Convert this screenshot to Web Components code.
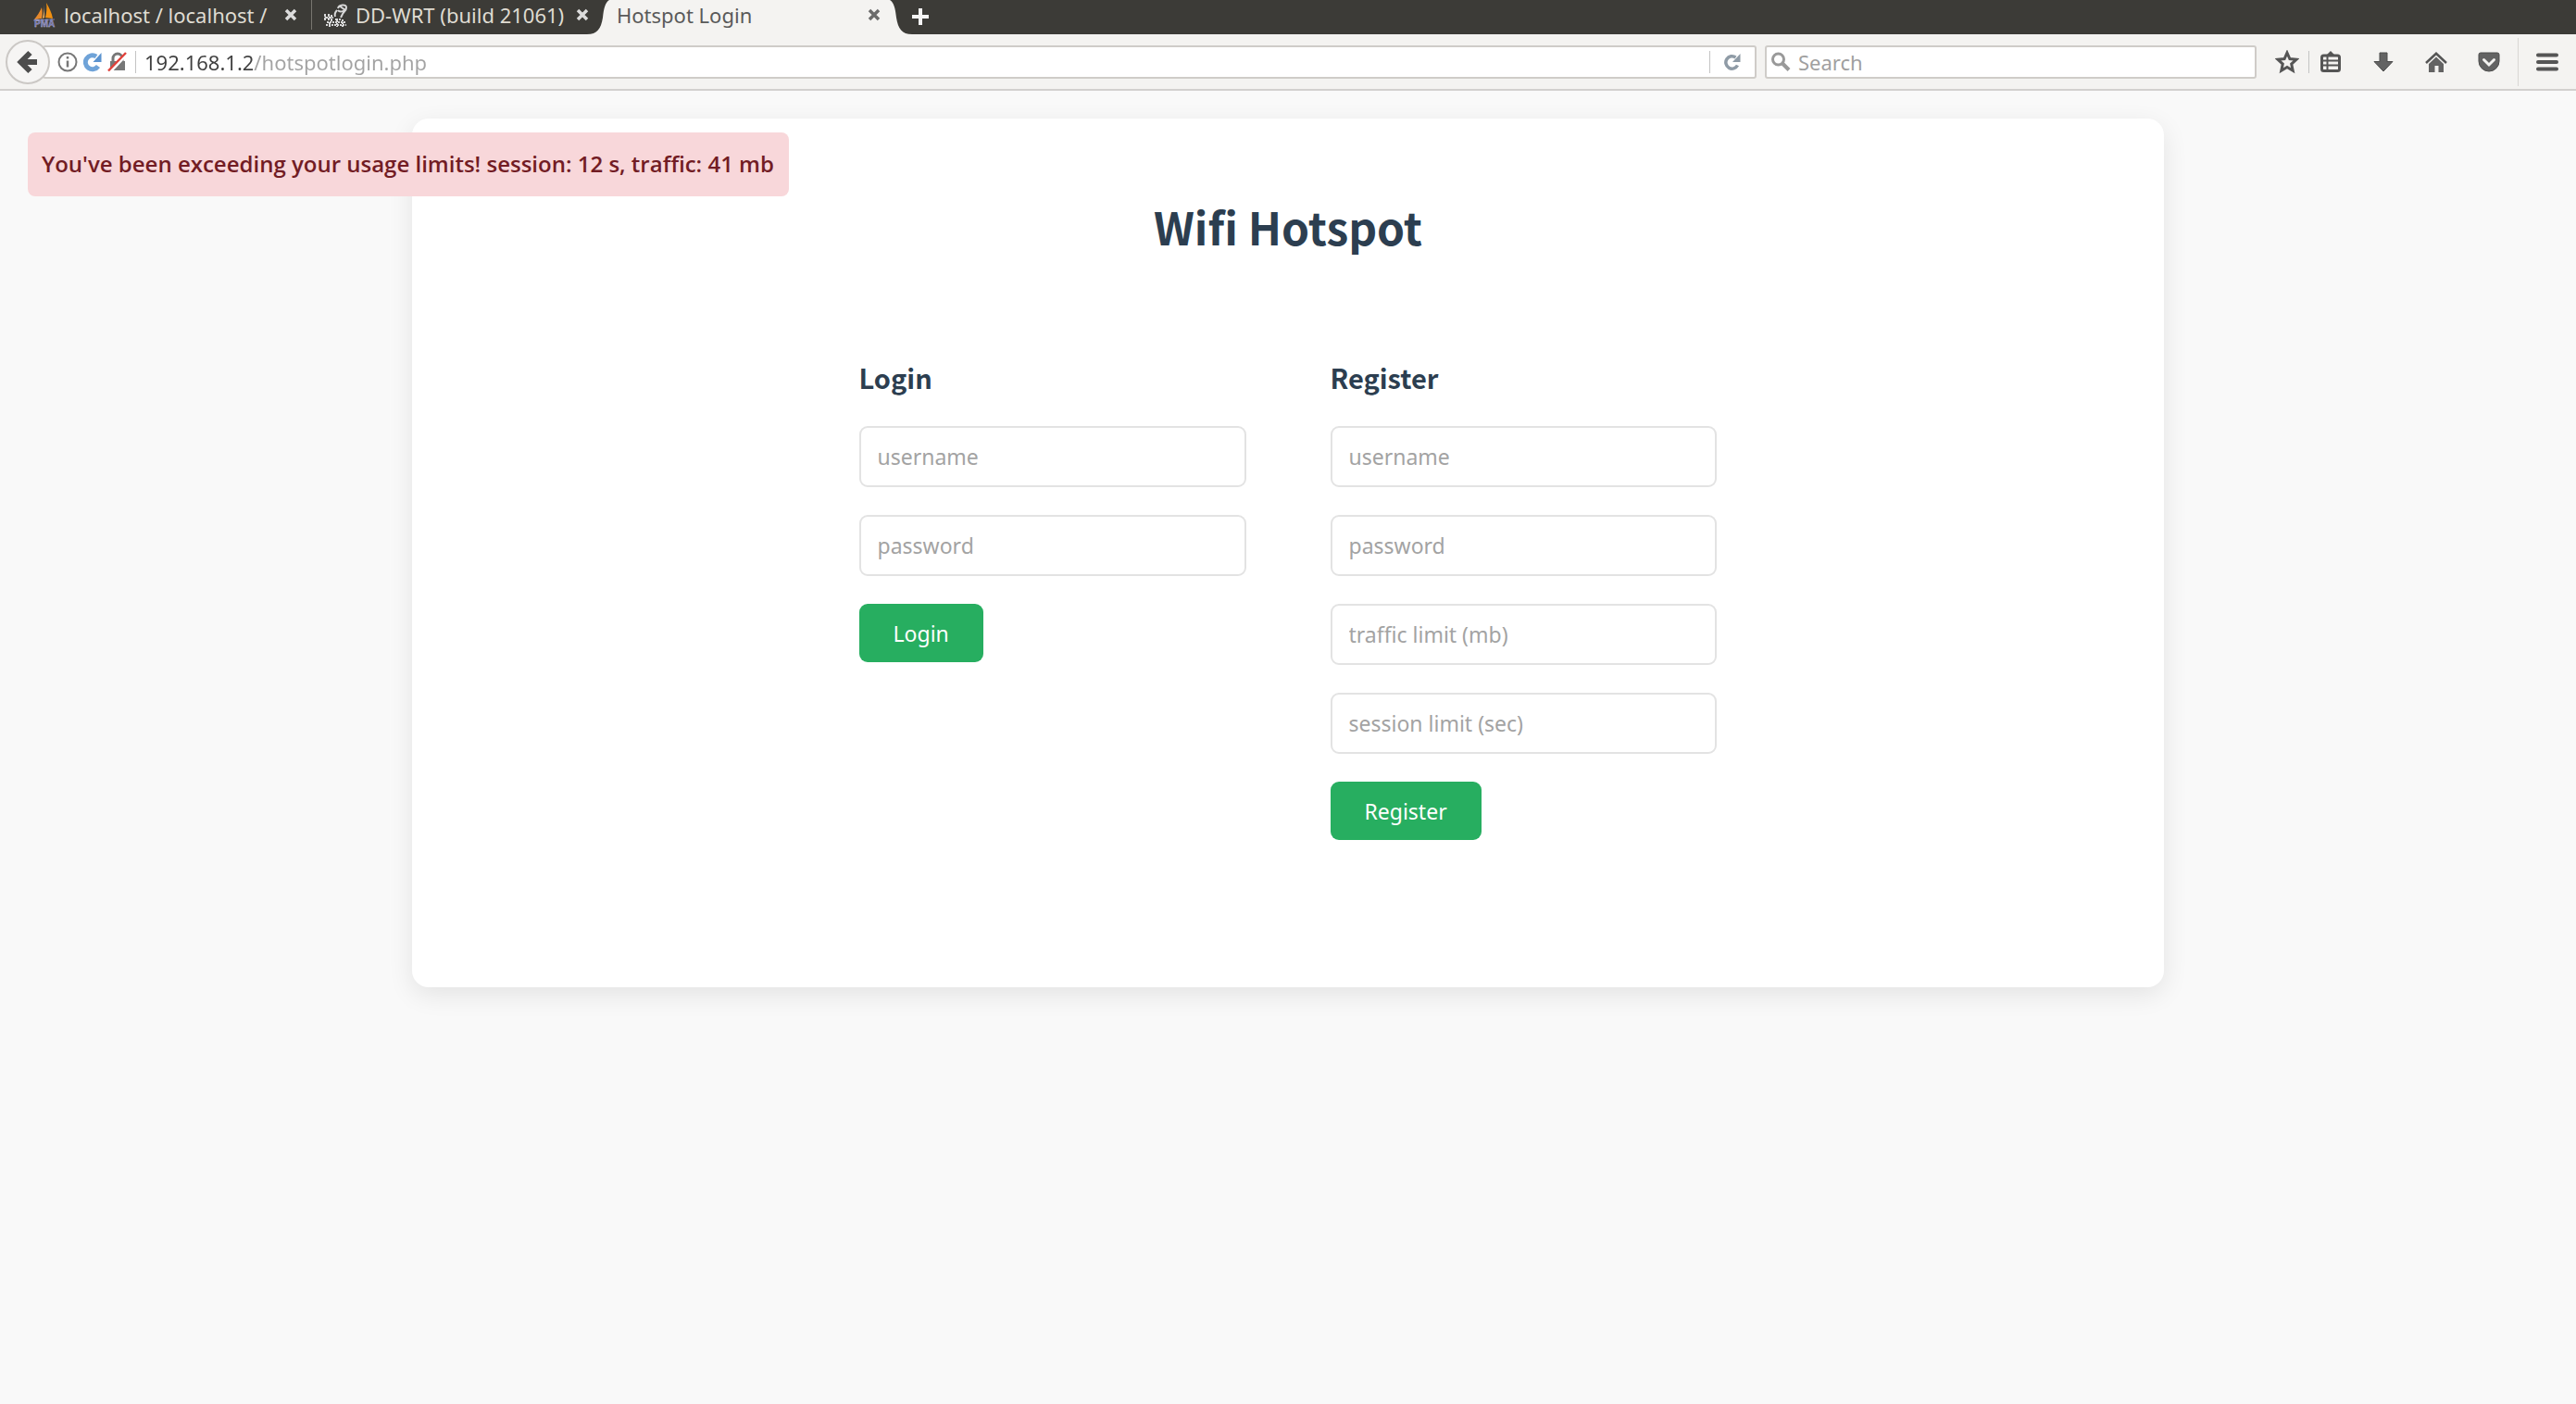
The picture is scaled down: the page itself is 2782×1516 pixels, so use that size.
<!DOCTYPE html>
<html lang="en">
<head>
<meta charset="utf-8">
<title>Hotspot Login</title>
<style>
  body { margin: 0; background: #f9f9f9; font-family: "Noto Sans", sans-serif; }
</style>
</head>
<body>
<browser-window>
  <tab-strip slot="tabs">
    <browser-tab label="localhost / localhost /">
      <svg slot="icon" width="26" height="32" viewBox="0 0 26 32">
        <path fill="#f29111" d="M15 3c3 5 6 11 7 17l-8-1c1-5 2-10 1-16z"/>
        <path fill="#e8892b" d="M10 8c1 4 1 8 0 12l-8 1c3-4 6-8 8-13z"/>
        <path fill="#f7b45a" d="M13 5v14l-2 1c1-5 2-10 2-15z"/>
        <path stroke="#777ab0" stroke-width="1" d="M1 22l23-1"/>
        <text x="2" y="29" font-family="Liberation Sans" font-weight="700" font-size="10" fill="#6c6db0" stroke="#c9c9dd" stroke-width=".3">PMA</text>
      </svg>
    </browser-tab>
    <browser-tab label="DD-WRT (build 21061)">
      <svg slot="icon" width="26" height="28" viewBox="0 0 26 28" fill="none" stroke="#d8d8d8">
        <path stroke-width="2" d="M15 7c1-4 9-5 9-1s-7 6-9 3M16 4l7 5M14 9c-2 2-3 4-2 7M24 8l-4 5-2 4"/>
        <path stroke-width="2" stroke-dasharray="3 1" d="M1 13v8M5 13v8M8 14v7M1 17h9M12 19h6"/>
        <path stroke-width="2" stroke-dasharray="2 1" d="M2 25h22M3 22h20M14 20v7M20 19v8M6 22v5"/>
      </svg>
    </browser-tab>
    <browser-tab label="Hotspot Login" active></browser-tab>
  </tab-strip>
  <browser-toolbar slot="toolbar"></browser-toolbar>

  <usage-alert>You've been exceeding your usage limits! session: 12 s, traffic: 41 mb</usage-alert>
  <hotspot-card heading="Wifi Hotspot">
    <account-form heading="Login" action="Login">
      <text-field placeholder="username"></text-field>
      <text-field placeholder="password" type="password"></text-field>
    </account-form>
    <account-form heading="Register" action="Register">
      <text-field placeholder="username"></text-field>
      <text-field placeholder="password" type="password"></text-field>
      <text-field placeholder="traffic limit (mb)"></text-field>
      <text-field placeholder="session limit (sec)"></text-field>
    </account-form>
  </hotspot-card>
</browser-window>

<script>
  function define(name, render) {
    customElements.define(name, class extends HTMLElement {
      connectedCallback() {
        if (this.shadowRoot) return;
        this.attachShadow({ mode: "open" }).innerHTML = render(this);
      }
    });
  }

  define("browser-window", () => `
    <style>
      :host { display: flex; flex-direction: column; min-height: 100vh; }
      main { position: relative; flex: 1; padding: 30px 0; }
    </style>
    <slot name="tabs"></slot>
    <slot name="toolbar"></slot>
    <main><slot></slot></main>`);

  define("tab-strip", () => `
    <style>
      :host { display: flex; height: 37px; background: #3c3b37; }
      .new { width: 20px; padding: 0; border: 0; background: none; height: 36px; }
      .new svg { display: block; }
    </style>
    <slot></slot>
    <button class="new" aria-label="Open a new tab">
      <svg width="20" height="32" viewBox="0 0 20 32" stroke="#f4f4f4" stroke-width="4"><path d="M10 7v18M1 16h18"/></svg>
    </button>`);

  define("browser-tab", el => {
    const active = el.hasAttribute("active");
    return `
    <style>
      :host { display: flex; height: 37px; }
      .body { display: flex; align-items: center; box-sizing: border-box; height: 37px; padding-bottom: 6px; }
      .idle { width: 301px; padding-left: 13px; padding-right: 2px; }
      :host(:first-child) .idle { width: 336px; padding-left: 35px; padding-right: 15px; }
      :host(:first-child) { background: linear-gradient(#77756f, #77756f) right top / 1px 32px no-repeat; padding-right: 1px; }
      .active { width: 303px; padding-left: 8px; padding-right: 10px; background: #f4f3f1; }
      :host([active]) { margin-left: -4px; margin-right: -1px; }
      .title { flex: 1; min-width: 0; padding: 0; margin-left: 8px; border: 0; background: none; text-align: left;
        white-space: nowrap; font: 22px/30px "Noto Sans", sans-serif; color: #dfdbd2; }
      .active .title { margin-left: 0; color: #5a5a5a; }
      .close { width: 14px; height: 14px; padding: 0; border: 0; background: none; color: #dcdcdc; }
      .active .close { color: #6b6b6b; }
      svg { display: block; }
    </style>
    ${active ? '<svg width="24" height="37" viewBox="0 0 24 37" fill="#f4f3f1"><path d="M0 37C11 37 15 31 17 19C18 9 20 2 24 0V37Z"/></svg>' : ""}
    <div class="body ${active ? "active" : "idle"}">
      <slot name="icon"></slot>
      <button class="title">${el.getAttribute("label")}</button>
      <button class="close" aria-label="Close tab"><svg width="14" height="14" viewBox="0 0 14 14" stroke="currentColor" stroke-width="3.500"><path d="M2 2l10 10M12 2L2 12"/></svg></button>
    </div>
    ${active ? '<svg width="24" height="37" viewBox="0 0 24 37" fill="#f4f3f1"><path d="M24 37C13 37 9 31 7 19C6 9 4 2 0 0V37Z"/></svg>' : ""}`;
  });

  define("browser-toolbar", () => `
    <style>
      :host { display: flex; align-items: center; box-sizing: border-box; height: 61px; padding-left: 6px;
        background: #f4f3f1; border-bottom: 2px solid #d2d0ce; }
      svg { display: block; flex: none; }
      button { padding: 0; border: 0; background: none; display: flex; align-items: center; justify-content: center; flex: none; }
      input { min-width: 0; padding: 0; border: 0; outline: 0; background: none; font: 22px/30px "Noto Sans", sans-serif; }
      .back { z-index: 1; box-sizing: border-box; width: 48px; height: 48px; border: 2px solid #cbc8c5; border-radius: 50%; background: #f6f5f4; }
      .box { display: flex; align-items: center; box-sizing: border-box; height: 36px; background: #fff; border: 2px solid #cfccc8; border-radius: 3px; }
      .address { flex: 1; margin-left: -8px; padding-left: 14px; gap: 6px; }
      .bar { width: 1px; height: 24px; background: #c4c4c4; flex: none; }
      .site { display: flex; align-items: center; gap: 6px; margin-right: 2px; }
      .url { flex: 1; margin-left: 3px;
        background: linear-gradient(90deg, #3f3f3f 117px, #a3a3a3 117px); -webkit-background-clip: text; background-clip: text; color: transparent; }
      .reload { width: 48px; margin-left: -6px; }
      .search { flex: 0 1 531px; margin: 0 10px 0 9px; padding-left: 4px; gap: 8px; }
      .search input { flex: 1; color: #555; }
      .search input::placeholder { color: #a0a0a0; opacity: 1; }
      .tool { width: 46px; height: 46px; }
      .tools { display: flex; gap: 11px; }
      .menu { width: 62px; height: 46px; }
      .tall { height: 52px; margin-left: 8px; background: #d9d7d4; }
    </style>
    <button class="back" aria-label="Back"><svg width="24" height="26" viewBox="0 0 24 26" fill="none" stroke="#4d4d4d" stroke-width="6"><path d="M22 13H5M14.500 3L4.500 13L14.500 23"/></svg></button>
    <div class="box address">
      <span class="site">
        <svg width="22" height="22" viewBox="0 0 22 22" fill="none" stroke="#777" stroke-width="2"><circle cx="11" cy="11" r="9.500"/><path stroke-width="2.500" d="M11 9.500v7M11 5v2.500"/></svg>
        <svg width="20" height="22" viewBox="0 0 20 22" fill="none"><path stroke="#6fa3d8" stroke-width="5" d="M16 15.500A7.500 7.500 0 1 1 14 5"/><path fill="#5b93cf" d="M19.500 1v10h-9z"/></svg>
        <svg width="22" height="22" viewBox="0 0 22 22" fill="none"><path stroke="#777" stroke-width="3" d="M6 11V7a5 5 0 0 1 10 0v4"/><path fill="#777" d="M3 10h16v10H3z"/><path stroke="#fff" stroke-width="4" d="M2 22L21 2"/><path stroke="#e0413a" stroke-width="2.500" d="M1 20.500L20 1"/></svg>
      </span>
      <span class="bar"></span>
      <input type="text" class="url" aria-label="Address" value="192.168.1.2/hotspotlogin.php" spellcheck="false">
      <span class="bar"></span>
      <button class="reload" aria-label="Reload"><svg width="18" height="18" viewBox="0 0 18 18" fill="none"><path stroke="#8f9ba6" stroke-width="3.500" d="M14.500 12.500A6.700 6.700 0 1 1 12.500 4"/><path fill="#8f9ba6" d="M17.500 0v9H9z"/></svg></button>
    </div>
    <div class="box search">
      <svg width="22" height="22" viewBox="0 0 22 22" fill="none" stroke="#999"><circle cx="8.500" cy="8" r="6" stroke-width="3"/><path stroke-width="4" d="M13 12.500l7 7"/></svg>
      <input type="text" aria-label="Search" placeholder="Search">
    </div>
    <button class="tool" aria-label="Bookmark this page"><svg width="26" height="26" viewBox="0 0 26 26" fill="none" stroke="#555" stroke-width="3"><path d="M13 3l2.900 6.600 7.100.7-5.300 4.800 1.500 7.100L13 18.500l-6.200 3.700 1.500-7.100L3 10.300l7.100-.7z"/></svg></button>
    <span class="bar"></span>
    <div class="tools">
      <button class="tool" aria-label="Bookmarks list"><svg width="22" height="24" viewBox="0 0 22 24" fill="none" stroke="#555"><path fill="#555" stroke="none" d="M6 5l5-5 5 5z"/><rect x="1.500" y="5" width="19" height="16.500" rx="2" stroke-width="3"/><path stroke-width="2" d="M2 10.500h18M2 15.500h18M7.500 5v16"/></svg></button>
      <button class="tool" aria-label="Downloads"><svg width="22" height="22" viewBox="0 0 22 22" fill="#636363" stroke="#4d4d4d"><path d="M7 1h8v9.500h6L11 21 1 10.500h6z"/></svg></button>
      <button class="tool" aria-label="Home"><svg width="24" height="22" viewBox="0 0 24 22"><path fill="none" stroke="#555" stroke-width="2.500" d="M1 12L12 1.800 23 12"/><path fill="#636363" d="M12 5.500l8 7.500v9h-5.500v-7h-4v7H4v-9z"/></svg></button>
      <button class="tool" aria-label="Save to Pocket"><svg width="24" height="22" viewBox="0 0 24 22"><path fill="#636363" stroke="#4d4d4d" d="M3 1h18q2 0 2 2v7a11 11 0 0 1-22 0V3q0-2 2-2z"/><path fill="none" stroke="#f4f3f1" stroke-width="3" stroke-linecap="round" d="M6.500 8.500l5.500 5.500 5.500-5.500"/></svg></button>
    </div>
    <span class="bar tall"></span>
    <button class="menu" aria-label="Open menu"><svg width="26" height="20" viewBox="0 0 26 20" stroke="#555" stroke-width="4" stroke-linecap="round"><path d="M3 2.500h20M3 10h20M3 17.500h20"/></svg></button>`);

  define("usage-alert", () => `
    <style>
      :host { position: absolute; top: 45px; left: 30px; padding: 14px 16px 16px 15px; border-radius: 8px;
        background: #f8d7da; color: #721c24; font: 600 24px/39px "Open Sans", sans-serif; white-space: nowrap; }
    </style>
    <div role="alert"><slot></slot></div>`);

  define("hotspot-card", el => `
    <style>
      :host { display: block; box-sizing: border-box; width: 68%; margin: 0 auto; padding: 80px 0 159px; border-radius: 18px;
        background: #fff; box-shadow: 0 8px 28px rgba(0, 0, 0, .09); color: #2c3e50; }
      h1 { margin: 0 0 106px; font: 700 48px/72px "Noto Sans CJK SC", sans-serif; text-align: center; }
      .forms { display: flex; align-items: flex-start; gap: 91px; width: 49%; margin: 0 auto; }
    </style>
    <h1>${el.getAttribute("heading")}</h1>
    <div class="forms"><slot></slot></div>`);

  define("account-form", el => `
    <style>
      :host { display: block; flex: 1; min-width: 0; }
      h2 { margin: 0 0 32px; font: 700 29px/42px "Noto Sans CJK SC", sans-serif; }
      form { display: flex; flex-direction: column; align-items: flex-start; gap: 30px; }
      button { height: 63px; padding: 0 37px; border: 0; border-radius: 9px; background: #27ae60; color: #fff;
        font: 23px/32px "Noto Sans", sans-serif; }
    </style>
    <h2>${el.getAttribute("heading")}</h2>
    <form><slot></slot><button type="button">${el.getAttribute("action")}</button></form>`);

  define("text-field", el => `
    <style>
      :host { display: block; width: 100%; }
      input { display: block; box-sizing: border-box; width: 100%; height: 66px; padding: 0 18px; border: 2px solid #e3e3e3;
        border-radius: 9px; outline: 0; background: #fff; color: #444; font: 23px/32px "Noto Sans", sans-serif; }
      input::placeholder { color: #a3a3a3; opacity: 1; }
    </style>
    <input type="${el.getAttribute("type") || "text"}" placeholder="${el.getAttribute("placeholder")}" aria-label="${el.getAttribute("placeholder")}">`);
</script>
</body>
</html>
